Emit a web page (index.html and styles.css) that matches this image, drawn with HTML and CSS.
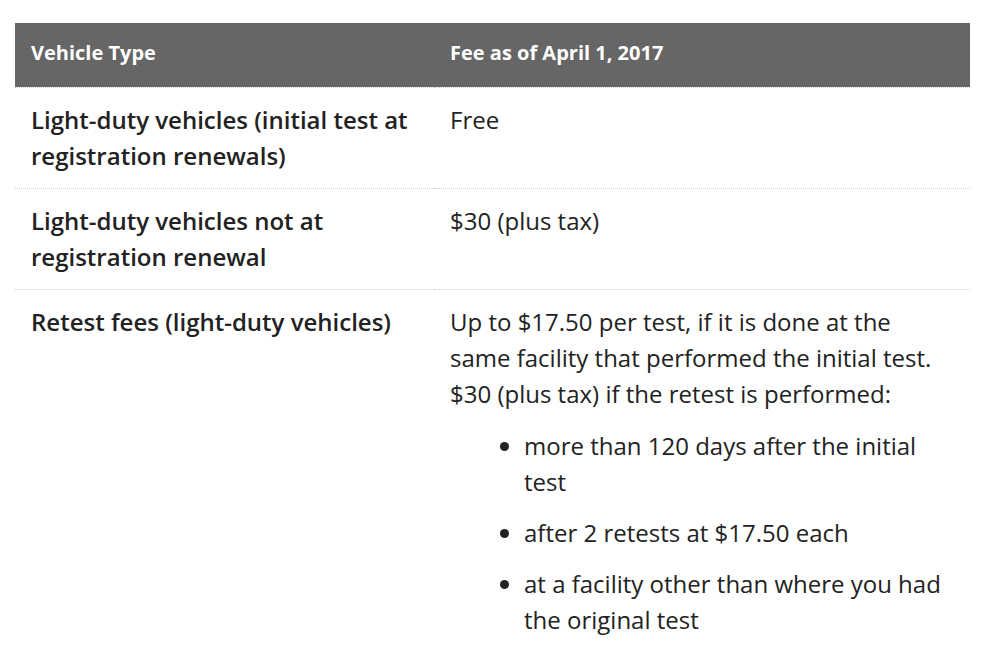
FILE: index.html
```html
<!DOCTYPE html>
<html lang="en">
<head>
<meta charset="utf-8">
<title>Fees</title>
<link rel="stylesheet" href="styles.css">
</head>
<body>
<table class="fees">
  <thead>
    <tr>
      <th class="col-type">Vehicle Type</th>
      <th>Fee as of April 1, 2017</th>
    </tr>
  </thead>
  <tbody>
    <tr>
      <td class="label">Light-duty vehicles (initial test at registration renewals)</td>
      <td>Free</td>
    </tr>
    <tr>
      <td class="label">Light-duty vehicles not at registration renewal</td>
      <td>$30 (plus tax)</td>
    </tr>
    <tr>
      <td class="label">Retest fees (light-duty vehicles)</td>
      <td>Up to $17.50 per test, if it is done at the same facility that performed the initial test. $30 (plus tax) if the retest is performed:
        <ul class="conds">
          <li>more than 120 days after the initial test</li>
          <li>after 2 retests at $17.50 each</li>
          <li>at a facility other than where you had the original test</li>
        </ul>
      </td>
    </tr>
  </tbody>
</table>
</body>
</html>
```
FILE: styles.css
```css
html, body {
  margin: 0;
  padding: 0;
  background: #fff;
}
body {
  padding: 23px 30px 0 15px;
  font-family: "Open Sans", "Liberation Sans", sans-serif;
  color: #222;
}
.fees {
  width: 955px;
  border-collapse: separate;
  border-spacing: 0;
  font-size: 24px;
  line-height: 36px;
}
.fees th {
  background: #666;
  color: #fff;
  font-weight: 700;
  font-size: 20px;
  line-height: 60px;
  text-align: left;
  padding: 0 16px 4px;
  vertical-align: middle;
}
.col-type {
  width: 387px;
}
.fees td {
  vertical-align: top;
  padding: 14px 16px 14px;
  border-top: 1px dotted #ccc;
}
.fees td.label {
  font-weight: 600;
}
.conds {
  margin: 16px 0 0;
  padding-left: 74px;
}
.conds li {
  margin-bottom: 15px;
}
```
